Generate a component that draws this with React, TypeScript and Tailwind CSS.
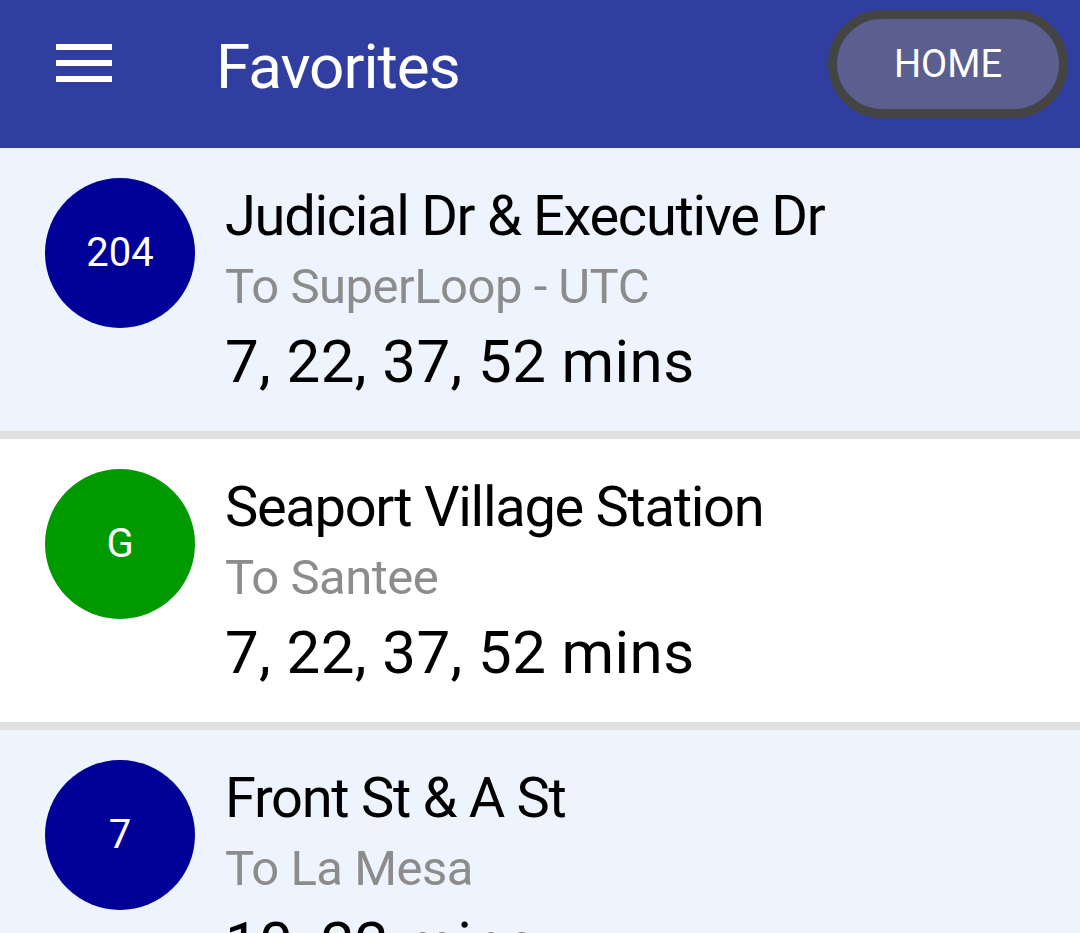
const favorites = [
  { badge: '204', color: 'bg-[#000099]', stop: 'Judicial Dr & Executive Dr', dest: 'To SuperLoop - UTC', times: '7, 22, 37, 52 mins', tint: 'bg-[#edf4fe]' },
  { badge: 'G', color: 'bg-[#009900]', stop: 'Seaport Village Station', dest: 'To Santee', times: '7, 22, 37, 52 mins', tint: 'bg-white' },
  { badge: '7', color: 'bg-[#000099]', stop: 'Front St & A St', dest: 'To La Mesa', times: '10, 22 mins', tint: 'bg-[#edf4fe]' },
];

function Row({ item }: { item: (typeof favorites)[number] }) {
  return (
    <div className={`flex h-[283px] shrink-0 ${item.tint}`}>
      <div className={`ml-[45px] mt-[30px] flex h-[150px] w-[150px] shrink-0 items-center justify-center rounded-full ${item.color}`}>
        <span className="text-[40px] leading-none text-white">{item.badge}</span>
      </div>
      <div className="ml-[30px] flex flex-col pt-[36px]">
        <div className="text-[56px] leading-[64px] tracking-[-1.3px] text-black">{item.stop}</div>
        <div className="mt-[7px] text-[49px] leading-[64px] tracking-[-0.5px] text-[#8c8c8c]">{item.dest}</div>
        <div className="mt-[8px] text-[60px] leading-[70px] tracking-[0.4px] text-black">{item.times}</div>
      </div>
    </div>
  );
}

export default function App() {
  return (
    <div className="flex h-[933px] w-[1080px] flex-col overflow-hidden bg-white font-['Roboto',sans-serif]">
      <header className="flex h-[148px] shrink-0 items-center bg-[#303f9f]">
        <div className="ml-[56px] flex w-[56px] flex-col gap-[10px] self-start pt-[44px]">
          <span className="h-[6px] bg-white" />
          <span className="h-[6px] bg-white" />
          <span className="h-[6px] bg-white" />
        </div>
        <h1 className="ml-[104px] -mt-[14px] text-[62px] leading-none tracking-[-1px] text-white">Favorites</h1>
        <button className="ml-auto mr-[12px] mb-[20px] flex h-[108px] w-[240px] items-center justify-center rounded-full border-[9px] border-[#444444] bg-[#5b5f8f] text-[38px] text-white">
          HOME
        </button>
      </header>
      {favorites.map((f, i) => (
        <div key={f.stop} className="flex flex-col">
          {i > 0 && <div className="h-[8px] bg-[#e0e0e0]" />}
          <Row item={f} />
        </div>
      ))}
    </div>
  );
}
